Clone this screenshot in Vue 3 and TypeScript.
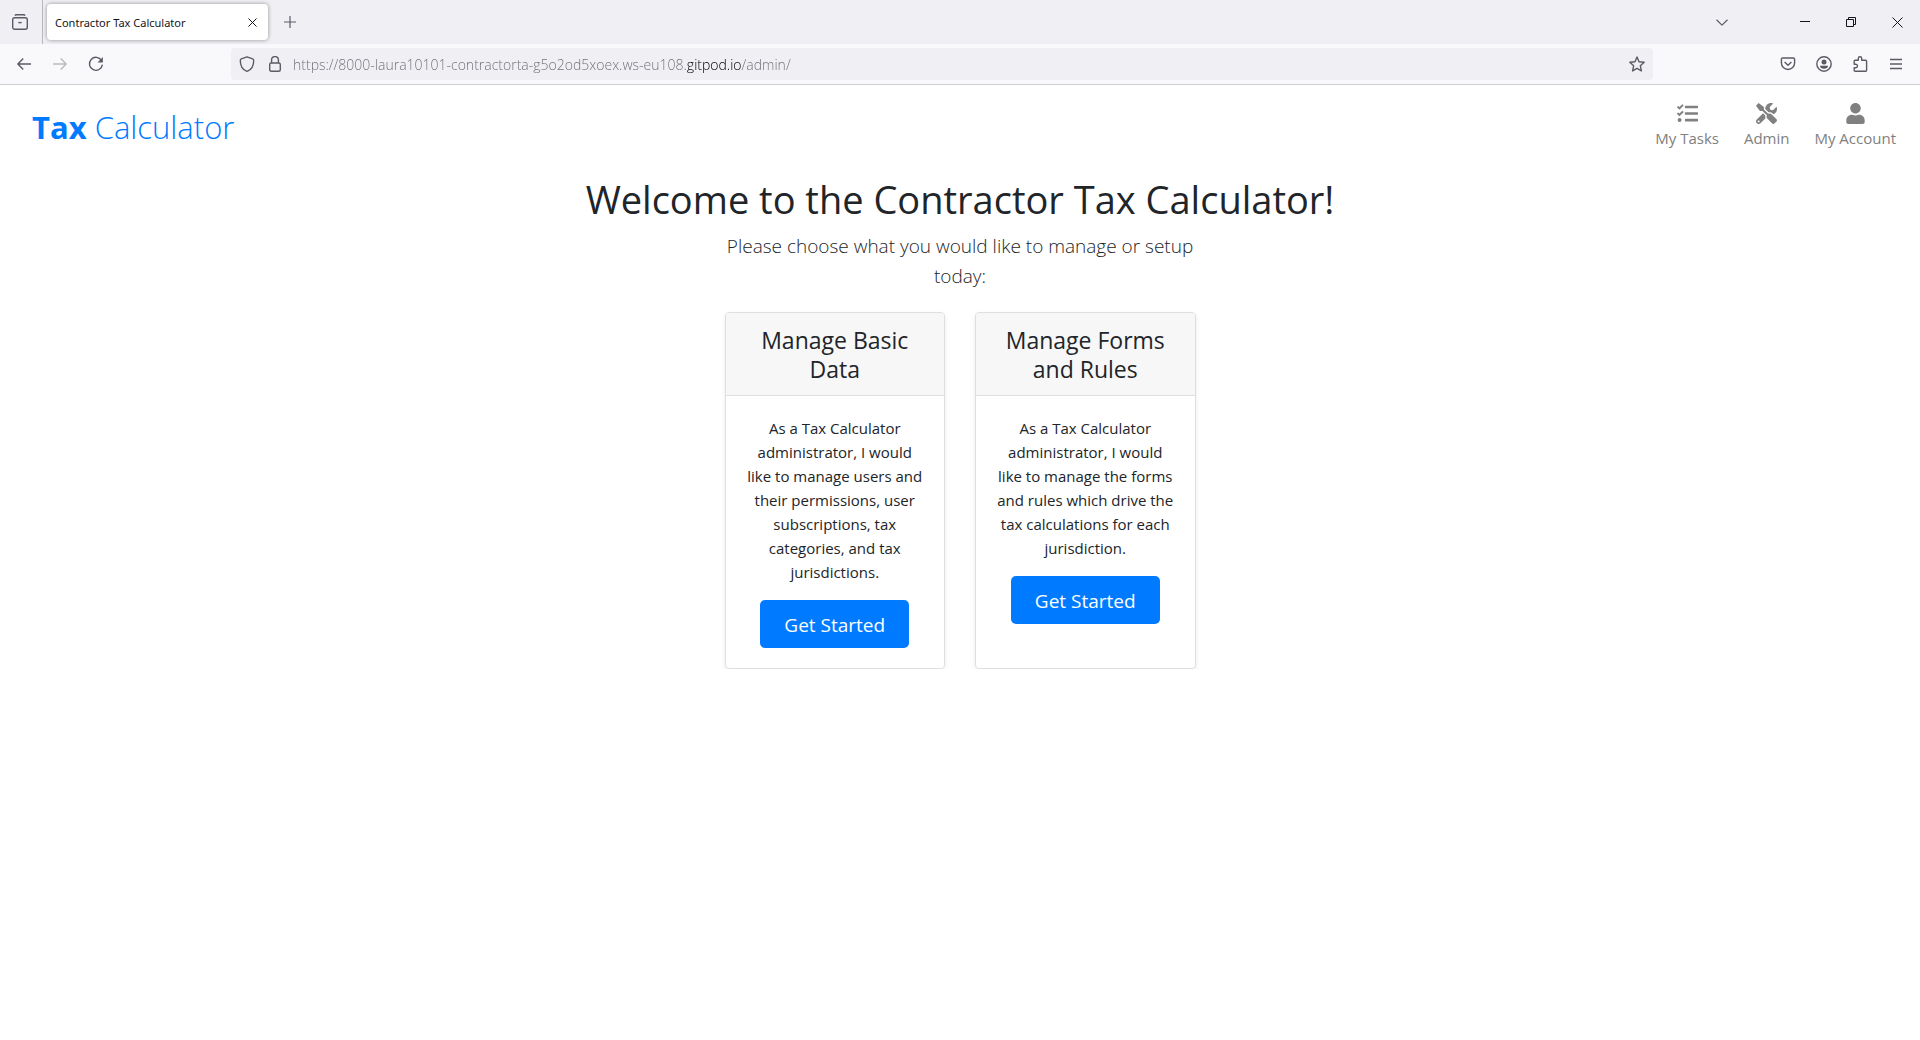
<script setup lang="ts">
import { ref } from 'vue'

interface NavItem {
  label: string
  width: number
  viewBox: string
  path: string
}

interface Card {
  title: string
  text: string
}

const address = ref('https://8000-laura10101-contractorta-g5o2od5xoex.ws-eu108.gitpod.io/admin/')

const navItems: NavItem[] = [
  {
    label: 'My Tasks',
    width: 21,
    viewBox: '0 0 512 512',
    path: 'M139.61 35.5a12 12 0 0 0-17 0L58.93 98.81l-22.7-22.12a12 12 0 0 0-17 0L3.53 92.41a12 12 0 0 0 0 17l47.59 47.4a12.78 12.78 0 0 0 17.61 0l15.59-15.62L156.52 69a12.09 12.09 0 0 0 .09-17zm0 159.19a12 12 0 0 0-17 0l-63.68 63.72-22.7-22.1a12 12 0 0 0-17 0L3.53 252a12 12 0 0 0 0 17L51 316.5a12.77 12.77 0 0 0 17.6 0l15.7-15.69 72.2-72.22a12 12 0 0 0 .09-16.9zM64 368c-26.49 0-48.59 21.5-48.59 48S37.53 464 64 464a48 48 0 0 0 0-96zm432 16H208a16 16 0 0 0-16 16v32a16 16 0 0 0 16 16h288a16 16 0 0 0 16-16v-32a16 16 0 0 0-16-16zm0-320H208a16 16 0 0 0-16 16v32a16 16 0 0 0 16 16h288a16 16 0 0 0 16-16V80a16 16 0 0 0-16-16zm0 160H208a16 16 0 0 0-16 16v32a16 16 0 0 0 16 16h288a16 16 0 0 0 16-16v-32a16 16 0 0 0-16-16z',
  },
  {
    label: 'Admin',
    width: 21,
    viewBox: '0 0 512 512',
    path: 'M501.1 395.7L384 278.6c-23.1-23.1-57.6-27.6-85.4-13.9L192 158.1V96L64 0 0 64l96 128h62.1l106.6 106.6c-13.6 27.8-9.2 62.3 13.9 85.4l117.1 117.1c14.6 14.6 38.2 14.6 52.7 0l52.7-52.7c14.5-14.6 14.5-38.2 0-52.7zM331.7 225c28.3 0 54.9 11 74.9 31l19.4 19.4c15.8-6.9 30.8-16.5 43.8-29.5 37.1-37.1 49.7-89.3 37.9-136.7-2.2-9-13.5-12.1-20.1-5.5l-74.4 74.4-67.9-11.3L334 98.9l74.4-74.4c6.6-6.6 3.4-17.9-5.7-20.2-47.4-11.7-99.6.9-136.6 37.9-28.5 28.5-41.9 66.1-41.2 103.6l82.1 82.1c8.1-1.9 16.5-2.9 24.7-2.9zm-103.9 82l-56.7-56.7L18.7 402.8c-25 25-25 65.5 0 90.5s65.5 25 90.5 0l123.6-123.6c-7.6-19.9-9.9-41.6-5-62.7zM64 472c-13.2 0-24-10.8-24-24 0-13.3 10.7-24 24-24s24 10.7 24 24c0 13.2-10.7 24-24 24z',
  },
  {
    label: 'My Account',
    width: 19,
    viewBox: '0 0 448 512',
    path: 'M224 256c70.7 0 128-57.3 128-128S294.7 0 224 0 96 57.3 96 128s57.3 128 128 128zm89.6 32h-16.7c-22.2 10.2-46.9 16-72.9 16s-50.6-5.8-72.9-16h-16.7C60.2 288 0 348.2 0 422.4V464c0 26.5 21.5 48 48 48h352c26.5 0 48-21.5 48-48v-41.6c0-74.2-60.2-134.4-134.4-134.4z',
  },
]

const cards: Card[] = [
  {
    title: 'Manage Basic Data',
    text: 'As a Tax Calculator administrator, I would like to manage users and their permissions, user subscriptions, tax categories, and tax jurisdictions.',
  },
  {
    title: 'Manage Forms and Rules',
    text: 'As a Tax Calculator administrator, I would like to manage the forms and rules which drive the tax calculations for each jurisdiction.',
  },
]
</script>

<template>
  <div class="window">
    <header class="tabstrip">
      <button class="view-btn" type="button" aria-label="Recent browsing">
        <svg class="line" width="16" height="16" viewBox="0 0 16 16">
          <path d="M3 1.6Q3.4.7 4.4.7h7.2q1 0 1.4.9" />
          <rect x=".7" y="3.7" width="14.6" height="11.6" rx="2" />
          <path d="M6.3 8.6h3.4" />
        </svg>
      </button>
      <div class="tab">
        <span class="tab-title">Contractor Tax Calculator</span>
        <button class="tab-close" type="button" aria-label="Close tab">
          <svg class="dark" width="9" height="9" viewBox="0 0 9 9"><path d="M.5.5l8 8M8.5.5l-8 8" /></svg>
        </button>
      </div>
      <button class="tool" type="button" aria-label="New tab">
        <svg class="line thin" width="12" height="12" viewBox="0 0 12 12"><path d="M6 0v12M0 6h12" /></svg>
      </button>
      <button class="tool tabs-list" type="button" aria-label="List all tabs">
        <svg class="line thin" width="12" height="7" viewBox="0 0 12 7"><path d="M.5.7L6 6.1 11.5.7" /></svg>
      </button>
      <div class="caption">
        <button type="button" aria-label="Minimize">
          <svg class="dark" width="10" height="10" viewBox="0 0 10 10"><path d="M0 4.5h10" /></svg>
        </button>
        <button type="button" aria-label="Restore">
          <svg class="dark" width="10" height="10" viewBox="0 0 10 10"><path d="M.5 2.5h7v7h-7zM2.5 2.5v-2h7v7h-2" /></svg>
        </button>
        <button type="button" aria-label="Close window">
          <svg class="dark" width="11" height="11" viewBox="0 0 11 11"><path d="M.5.5l10 10M10.5.5l-10 10" /></svg>
        </button>
      </div>
    </header>

    <div class="toolbar">
      <button class="tool" type="button" aria-label="Back">
        <svg class="line" width="14" height="12" viewBox="0 0 14 12"><path d="M14 6H1M6.2.6L.9 6l5.3 5.4" /></svg>
      </button>
      <button class="tool" type="button" aria-label="Forward" disabled>
        <svg class="line" width="14" height="12" viewBox="0 0 14 12"><path d="M0 6h13M7.8.6L13.1 6l-5.3 5.4" /></svg>
      </button>
      <button class="tool" type="button" aria-label="Reload">
        <svg class="line" width="16" height="16" viewBox="0 0 16 16">
          <path d="M13.6 4.6A6.5 6.5 0 1 0 14.4 8.6" />
          <path class="solid" d="M14.9 1v5.4H9.5z" />
        </svg>
      </button>

      <div class="urlbar">
        <svg class="line" width="16" height="16" viewBox="0 0 16 16">
          <path d="M8 .8l5.7 2.1q1 .5 1 1.500c0 5-2.500 9.100-6.100 10.700q-.6.200-1.200 0C3.800 13.500 1.300 9.400 1.300 4.400q0-1 1-1.500z" />
        </svg>
        <svg class="line" width="12" height="16" viewBox="0 0 12 16">
          <rect x=".7" y="7" width="10.600" height="8.300" rx="1.500" />
          <path d="M2.600 7V4a3.400 3.400 0 0 1 6.800 0v3" />
        </svg>
        <input v-model="address" class="address" type="text" aria-label="Address" spellcheck="false" />
        <button class="star" type="button" aria-label="Bookmark this page">
          <svg class="line" width="16" height="16" viewBox="0 0 16 16">
            <path d="M8 1l2 4.700 5.200.5-3.900 3.500 1.100 5.200L8 12.300l-4.400 2.600 1.100-5.200L.8 6.200 6 5.700z" />
          </svg>
        </button>
      </div>

      <button class="tool" type="button" aria-label="Save to Pocket">
        <svg class="line" width="16" height="16" viewBox="0 0 16 16">
          <path d="M2.700 2h10.600q1.300 0 1.300 1.300v3.600a6.600 6.600 0 0 1-13.200 0V3.300Q1.400 2 2.700 2z" />
          <path d="M4.600 6L8 9.200 11.400 6" />
        </svg>
      </button>
      <button class="tool" type="button" aria-label="Account">
        <svg class="line" width="16" height="16" viewBox="0 0 16 16">
          <circle cx="8" cy="8" r="7.200" />
          <circle class="solid" cx="8" cy="5.900" r="2.500" />
          <path class="solid" d="M4 9.700h8q0 3-4 3T4 9.700z" />
        </svg>
      </button>
      <button class="tool" type="button" aria-label="Extensions">
        <svg class="line" width="16" height="16" viewBox="0 0 16 16">
          <path d="M6.300 4.300V2.400a1.700 1.700 0 0 1 3.400 0v1.900h3.900q1 0 1 1v9q0 1-1 1H3.200q-1 0-1-1v-2.500h1.500a1.800 1.800 0 0 0 0-3.600H2.200V5.300q0-1 1-1z" />
        </svg>
      </button>
      <button class="tool" type="button" aria-label="Menu">
        <svg class="line" width="12" height="12" viewBox="0 0 12 12"><path d="M0 1.500h12M0 6h12M0 10.500h12" /></svg>
      </button>
    </div>

    <nav class="navbar">
      <a class="brand" href="#"><strong>Tax</strong> Calculator</a>
      <ul class="nav-list">
        <li v-for="item in navItems" :key="item.label">
          <a href="#">
            <svg :width="item.width" height="21" :viewBox="item.viewBox"><path :d="item.path" /></svg>
            <span>{{ item.label }}</span>
          </a>
        </li>
      </ul>
    </nav>

    <main>
      <h1>Welcome to the Contractor Tax Calculator!</h1>
      <p class="lead">Please choose what you would like to manage or setup today:</p>
      <div class="deck">
        <section v-for="card in cards" :key="card.title" class="card">
          <h2>{{ card.title }}</h2>
          <div class="card-body">
            <p>{{ card.text }}</p>
            <button type="button">Get Started</button>
          </div>
        </section>
      </div>
    </main>
  </div>
</template>

<style>
body {
  margin: 0;
  background: #fff;
}
</style>

<style scoped>
.window {
  font-family: "Open Sans", "Noto Sans", sans-serif;
  color: #212529;
}

.window * {
  box-sizing: border-box;
}

button {
  padding: 0;
  border: 0;
  background: none;
  font-family: inherit;
}

svg {
  display: block;
  flex: none;
}

.line {
  fill: none;
  stroke: #5b5b66;
  stroke-width: 1.4;
  stroke-linejoin: round;
}

.thin {
  stroke-width: 1.2;
}

.line .solid {
  fill: #5b5b66;
  stroke: none;
}

.dark {
  fill: none;
  stroke: #15141a;
  stroke-width: 1;
}

.tabstrip {
  display: flex;
  align-items: center;
  height: 44px;
  background: #f0f0f4;
}

.view-btn {
  display: flex;
  align-items: center;
  justify-content: center;
  width: 43px;
  height: 44px;
  padding-right: 2px;
  border-right: 1px solid #b8b8be;
}

.tab {
  display: flex;
  align-items: center;
  justify-content: space-between;
  width: 221px;
  height: 36px;
  margin: 0 4px;
  padding: 0 8px;
  border-radius: 4px;
  background: #fff;
  box-shadow: 0 0 4px rgba(0, 0, 0, 0.4);
}

.tab-title {
  color: #15141a;
  font-family: "Noto Sans", "Open Sans", sans-serif;
  font-size: 11px;
  white-space: nowrap;
}

.tab-close {
  display: flex;
  align-items: center;
  justify-content: center;
  width: 16px;
  height: 16px;
}

.tool {
  display: flex;
  align-items: center;
  justify-content: center;
  width: 36px;
  height: 32px;
}

.tool:disabled {
  opacity: 0.4;
}

.tabs-list {
  margin-left: auto;
}

.caption {
  display: flex;
  margin-left: 42px;
}

.caption button {
  display: flex;
  align-items: center;
  justify-content: center;
  width: 46px;
  height: 44px;
}

.toolbar {
  display: flex;
  align-items: center;
  height: 41px;
  padding: 0 6px;
  border-bottom: 1px solid #ccc;
  background: #f9f9fb;
}

.urlbar {
  display: flex;
  flex: 1;
  align-items: center;
  gap: 14px;
  height: 32px;
  margin: 0 117px;
  padding: 0 8px;
  border-radius: 4px;
  background: #f0f0f4;
}

/* The registered domain is drawn darker than the rest of the address. */
.address {
  flex: 1;
  min-width: 0;
  height: 32px;
  margin-left: -2px;
  padding: 1px 0 0;
  border: 0;
  outline: 0;
  background: linear-gradient(90deg, #6c6c74 394px, #000 394px 449px, #6c6c74 449px);
  background-clip: text;
  color: transparent;
  font-family: inherit;
  font-size: 14px;
  font-weight: 300;
}

.navbar {
  display: flex;
  align-items: center;
  justify-content: space-between;
  height: 84px;
  padding: 0 24px 0 32px;
}

.brand {
  color: #007bff;
  font-size: 31px;
  font-weight: 300;
  text-decoration: none;
}

.brand strong {
  font-weight: 700;
}

.nav-list {
  display: flex;
  gap: 25px;
  margin: 0 0 2px;
  padding: 0;
  list-style: none;
}

.nav-list a {
  display: flex;
  flex-direction: column;
  align-items: center;
  gap: 2px;
  color: gray;
  font-size: 15px;
  line-height: 24px;
  text-decoration: none;
}

.nav-list svg {
  fill: gray;
}

main {
  padding: 6px 16px 0;
  text-align: center;
}

h1 {
  margin: 0 0 8px;
  font-size: 38px;
  font-weight: 400;
  line-height: 48px;
}

.lead {
  max-width: 480px;
  margin: 0 auto 21px;
  font-size: 19px;
  font-weight: 300;
  line-height: 30px;
}

.deck {
  display: flex;
  gap: 30px;
  max-width: 471px;
  margin: 0 auto;
}

.card {
  flex: 1;
  border: 1px solid #dfdfdf;
  border-radius: 4px;
  box-shadow: 0 2px 4px rgba(0, 0, 0, 0.08);
}

.card h2 {
  margin: 0;
  padding: 13px 20px 11px;
  border-bottom: 1px solid #dfdfdf;
  border-radius: 3px 3px 0 0;
  background: #f7f7f7;
  font-size: 23px;
  font-weight: 400;
  line-height: 29px;
}

.card-body {
  padding: 20px;
}

.card p {
  margin: 0 0 16px;
  font-size: 15px;
  line-height: 24px;
}

.card button {
  height: 48px;
  padding: 2px 24px 0;
  border-radius: 5px;
  background: #007bff;
  color: #fff;
  font-size: 19px;
}
</style>
